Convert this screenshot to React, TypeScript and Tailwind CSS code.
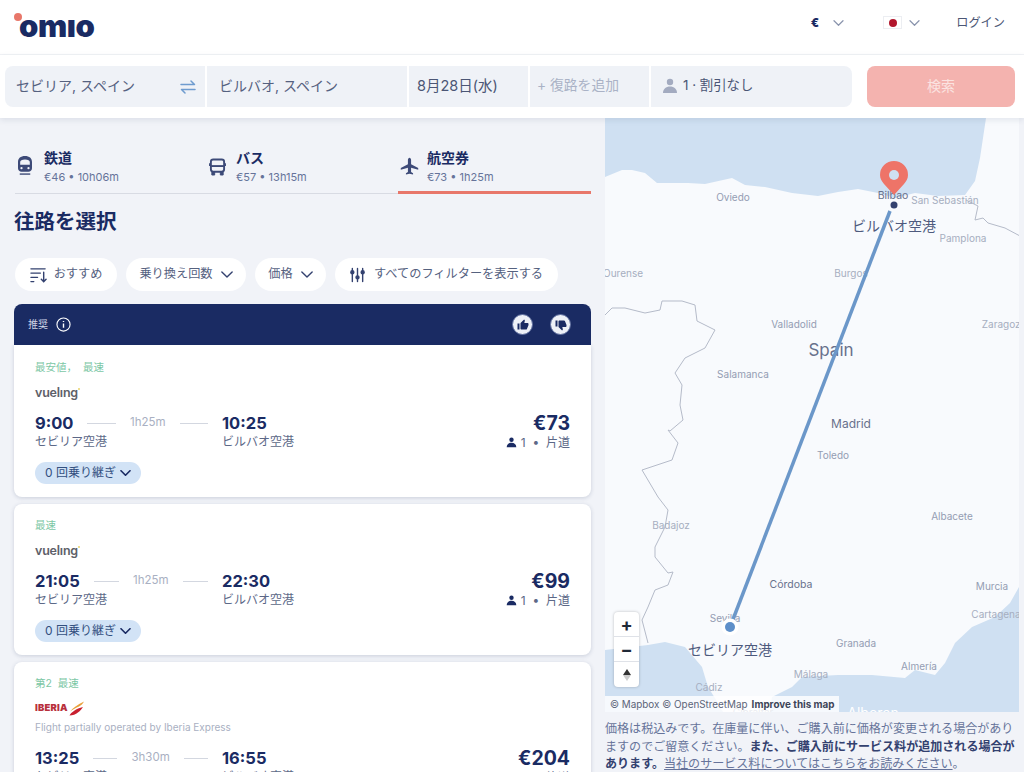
import React from "react";

const FONT = "[font-family:Inter,'Noto_Sans_CJK_JP',sans-serif]";

const Chevron = ({ className }: { className?: string }) => (
  <svg viewBox="0 0 14 8" className={className} fill="none" stroke="currentColor" strokeWidth="1.6" strokeLinecap="round" strokeLinejoin="round">
    <path d="M1 1l6 6 6-6" />
  </svg>
);

const Person = ({ className }: { className?: string }) => (
  <svg viewBox="0 0 16 16" className={className} fill="currentColor">
    <circle cx="8" cy="4" r="3.2" />
    <path d="M1 15c0-4 3-6.5 7-6.5s7 2.5 7 6.5z" />
  </svg>
);

const Train = () => (
  <svg viewBox="0 0 18 24" className="mt-[7px] h-[21px] w-[16px] text-[#3d4a78]" fill="currentColor">
    <path fillRule="evenodd" d="M9 1C4 1 1 3.5 1 8v7c0 2.5 2 4 4 4h8c2 0 4-1.500 4-4V8c0-4.500-3-7-8-7zM3.500 8c0-2 2-3 5.500-3s5.500 1 5.500 3v3h-11z" />
    <circle cx="5" cy="15" r="1.300" fill="#f1f3f8" />
    <circle cx="13" cy="15" r="1.300" fill="#f1f3f8" />
    <path d="M3 21h12v1.600H3z" />
  </svg>
);

const Bus = () => (
  <svg viewBox="0 0 18 20" className="mt-[9px] h-[20px] w-[17px] text-[#3d4a78]" fill="none" stroke="currentColor" strokeWidth="2">
    <rect x="2" y="2" width="14" height="13" rx="2.500" />
    <path d="M2 9h14" />
    <path d="M3 15v3.500h3V15M12 15v3.500h3V15" fill="currentColor" strokeWidth="1" />
    <path d="M0.800 6v3M17.200 6v3" strokeWidth="1.500" />
  </svg>
);

const Plane = () => (
  <svg viewBox="0 0 24 24" className="mt-[9px] h-[19px] w-[19px] text-[#3d4a78]" fill="currentColor">
    <path d="M23 16v-2l-9-5V3.500C14 2.670 13 1 12 1s-2 1.670-2 2.500V9l-9 5v2l9-2.500V19l-2.500 1.500V22l4.500-1 4.500 1v-1.500L14 19v-5.500z" />
  </svg>
);

const SortIcon = () => (
  <svg viewBox="0 0 18 16" className="h-[16px] w-[17px] text-[#33416f]" fill="none" stroke="currentColor" strokeWidth="1.500" strokeLinecap="round">
    <path d="M1 1.500h15M1 6h10M1 10.500h7M1 15h3" />
    <path d="M14.500 5v10M12 12.500l2.500 2.700 2.500-2.700" />
  </svg>
);

const SlidersIcon = () => (
  <svg viewBox="0 0 16 16" className="h-[16px] w-[15px] text-[#33416f]" fill="none" stroke="currentColor" strokeWidth="1.500" strokeLinecap="round">
    <path d="M2.500 1v14M8 1v14M13.500 1v14" />
    <circle cx="2.500" cy="5" r="1.600" fill="currentColor" />
    <circle cx="8" cy="10.500" r="1.600" fill="currentColor" />
    <circle cx="13.500" cy="5" r="1.600" fill="currentColor" />
  </svg>
);

const Thumb = ({ down }: { down?: boolean }) => (
  <div className="flex h-[21px] w-[21px] items-center justify-center rounded-full border border-[#5f6f9f] bg-[#eef1f7]">
    <svg viewBox="0 0 24 24" className={down ? "h-[12px] w-[12px] -scale-y-100 text-[#1a2b63]" : "h-[12px] w-[12px] text-[#1a2b63]"} fill="currentColor">
      <path d="M1 21h4V9H1v12zm22-11c0-1.100-.9-2-2-2h-6.310l.95-4.570.03-.32c0-.41-.17-.79-.44-1.060L14.170 1 7.590 7.590C7.220 7.950 7 8.450 7 9v10c0 1.100.9 2 2 2h9c.83 0 1.540-.5 1.840-1.220l3.020-7.050c.09-.23.14-.47.14-.73v-2z" />
    </svg>
  </div>
);

const Tab = ({ icon, title, sub, active, width }: { icon: React.ReactNode; title: string; sub: string; active?: boolean; width: string }) => (
  <div className={`${width} flex items-start ${active ? "-mb-px h-[46px] border-b-[3px] border-[#e8776a]" : "h-[45px]"}`}>
    <div className="flex w-[29px] justify-start pl-[2px]">{icon}</div>
    <div className="flex flex-col">
      <span className="text-[14px] font-bold leading-[20px] text-[#1a2b63]">{title}</span>
      <span className="text-[11px] leading-[18px] text-[#66739a]">{sub}</span>
    </div>
  </div>
);

const Times = ({ dep, arr, dur, from, to, price }: { dep: string; arr: string; dur: string; from: string; to: string; price: string }) => (
  <div className="flex items-start justify-between">
    <div className="flex flex-col">
      <div className="flex h-[22px] items-center">
        <div className="flex w-[187px] items-center gap-[14px] pr-[14px]">
          <span className="text-[16.500px] font-bold text-[#1a2b63]">{dep}</span>
          <div className="h-px flex-1 bg-[#d3d7e0]" />
          <span className="text-[11.500px] text-[#a9b0c2]">{dur}</span>
          <div className="h-px flex-1 bg-[#d3d7e0]" />
        </div>
        <span className="text-[16.500px] font-bold text-[#1a2b63]">{arr}</span>
      </div>
      <div className="flex h-[16px] text-[12px] leading-[16px] text-[#5c6887]">
        <span className="w-[187px]">{from}</span>
        <span>{to}</span>
      </div>
    </div>
    <div className="flex flex-col items-end">
      <span className="text-[19.500px] font-bold leading-[23px] text-[#1a2b63]">{price}</span>
      <div className="flex h-[15px] items-center gap-[4px] text-[12px] text-[#5c6887]">
        <Person className="h-[11px] w-[11px] text-[#1a2b63]" />
        <span>1&nbsp;&nbsp;•&nbsp;&nbsp;片道</span>
      </div>
    </div>
  </div>
);

const StopsPill = () => (
  <div className="mt-[12px] flex h-[22px] w-[106px] items-center justify-center gap-[4px] rounded-full bg-[#d2e3f6] text-[12px] text-[#33507f]">
    <span>0 回乗り継ぎ</span>
    <Chevron className="h-[6px] w-[11px] text-[#1a2b63] [stroke-width:2.2]" />
  </div>
);

const Vueling = () => (
  <div className="mt-[8px] flex h-[20px] items-center">
    <span className="text-[12.500px] font-semibold tracking-[-0.2px] text-[#5d6068]">vuelıng</span>
    <span className="mb-[8px] h-[2px] w-[2px] rounded-full bg-[#e9d36a]" />
  </div>
);

const labels: [string, number, number, number, string][] = [
  ["Oviedo", 128, 83, 10, "#949db3"],
  ["Bilbao", 288, 81, 10.500, "#68718c"],
  ["San Sebastián", 340, 86, 10, "#a6aec0"],
  ["Pamplona", 358, 124, 10, "#a6aec0"],
  ["Ourense", 18, 159, 10, "#a6aec0"],
  ["Burgos", 246, 159, 10, "#a6aec0"],
  ["Valladolid", 189, 210, 10, "#949db3"],
  ["Zaragoza", 399, 210, 10, "#a6aec0"],
  ["Spain", 226, 238, 17, "#68718c"],
  ["Salamanca", 138, 260, 10, "#949db3"],
  ["Madrid", 246, 310, 12, "#68718c"],
  ["Toledo", 228, 341, 10, "#949db3"],
  ["Badajoz", 66, 411, 10, "#a6aec0"],
  ["Albacete", 347, 402, 10, "#949db3"],
  ["Córdoba", 186, 470, 10.500, "#68718c"],
  ["Murcia", 387, 472, 10, "#949db3"],
  ["Cartagena", 391, 500, 10, "#a6aec0"],
  ["Sevilla", 120, 504, 10, "#949db3"],
  ["Granada", 251, 529, 10, "#949db3"],
  ["Almería", 314, 552, 10, "#949db3"],
  ["Málaga", 206, 560, 10, "#a6aec0"],
  ["Cádiz", 104, 573, 10, "#a6aec0"],
  ["Gibraltar", 148, 598, 10, "#949db3"],
  ["Alboran", 268, 600, 14, "#ffffff"],
];

const MapPanel = () => (
  <div className="relative h-[594px] w-[414px] overflow-hidden bg-[#f8fafd]">
    <svg viewBox="0 0 414 594" className="absolute inset-0 h-[594px] w-[414px]">
      <path fill="#cfe0f2" d="M0 59L17 52L27 52L40 55L52 65L83 65L100 66L127 60L140 67L160 69L187 75L213 78L233 74L253 71L273 75L290 80L310 75L333 78L360 77L370 63L375 40L381 0L0 0Z" />
      <path fill="#cfe0f2" d="M0 532L43 527L60 524L80 529L97 549L103 569L113 585L118 594L0 594Z" />
      <path fill="#cfe0f2" d="M165 594L167 579L187 569L197 559L233 557L267 557L300 560L310 552L330 557L340 545L350 525L367 509L390 499L405 485L414 469L414 594Z" />
      <path fill="none" stroke="#b5bbc9" strokeWidth="1" d="M361 82L373 88L370 102L378 100L383 105L400 110L415 118" />
      <path fill="none" stroke="#b5bbc9" strokeWidth="1" d="M0 197L7 190L20 190L40 195L55 192L57 183L77 183L90 187L92 203L110 212L100 230L80 240L70 255L77 267L75 287L78 302L65 313L63 312L73 325L67 342L37 352L53 379L63 392L60 409L50 429L50 439L63 455L68 454L63 467L50 472L43 489L37 502L43 525" />
      {labels.map(([t, x, y, s, c]) => (
        <text key={t} x={x} y={y} fontSize={s} fill={c} textAnchor="middle" fontFamily="Inter, sans-serif">{t}</text>
      ))}
      <text x="289" y="113" fontSize="14" fill="#4e5a7d" textAnchor="middle" fontFamily="'Noto Sans CJK JP', sans-serif">ビルバオ空港</text>
      <text x="125" y="537" fontSize="14" fill="#4e5a7d" textAnchor="middle" fontFamily="'Noto Sans CJK JP', sans-serif">セビリア空港</text>
      <path d="M285 93L127 504" stroke="#6b97c9" strokeWidth="3.500" />
      <circle cx="125" cy="509" r="8.500" fill="#ffffff" />
      <circle cx="125" cy="509" r="5" fill="#5e8fc9" />
      <circle cx="289" cy="87" r="3.500" fill="#33416f" />
      <path fill="#ee7468" d="M289 77L279 66C277 63 275 61 275 57a14 14 0 0 1 28 0C303 61 301 63 299 66Z" />
      <circle cx="289" cy="57" r="5" fill="#cfe0f2" />
    </svg>
    <div className="absolute left-[9px] top-[494px] flex h-[75px] w-[25px] flex-col divide-y divide-[#dfe2e8] rounded-[4px] bg-white text-[#1f2937] shadow-[0_0_3px_rgba(0,0,0,0.25)]">
      <div className="flex h-[25px] items-center justify-center text-[18px] font-bold">+</div>
      <div className="flex h-[25px] items-center justify-center text-[18px] font-bold">−</div>
      <div className="flex h-[25px] flex-col items-center justify-center">
        <div className="h-0 w-0 border-x-[4px] border-b-[6px] border-x-transparent border-b-[#333]" />
        <div className="h-0 w-0 border-x-[4px] border-t-[6px] border-x-transparent border-t-[#ccc]" />
      </div>
    </div>
    <div className="absolute bottom-0 left-0 flex h-[16px] w-[234px] items-center gap-[4px] bg-[#ffffffcc] pl-[5px] text-[9.900px] text-[#5c6478]">
      <span className="whitespace-nowrap">© Mapbox © OpenStreetMap</span>
      <span className="whitespace-nowrap font-bold text-[#3d4558]">Improve this map</span>
    </div>
  </div>
);

export default function App() {
  return (
    <div className={`${FONT} h-[772px] w-[1024px] overflow-hidden bg-[#f1f3f8]`}>
      <header className="flex h-[55px] items-center justify-between border-b border-[#f1f3f6] bg-white pl-[14px] pr-[19px]">
        <div className="relative mb-[4px] flex h-[40px] items-center pl-[5px]">
          <span className="text-[31px] font-black leading-none tracking-[-0.4px] text-[#1a2b63]">omıo</span>
          <span className="absolute left-0 top-[8px] h-[8px] w-[8px] rounded-full bg-[#e8776a]" />
        </div>
        <div className="mb-[8px] flex items-center text-[#8a94ad]">
          <span className="text-[12px] font-black text-[#1a2b63]">€</span>
          <Chevron className="ml-[14px] h-[6px] w-[11px]" />
          <div className="ml-[39px] flex h-[13px] w-[19px] items-center justify-center border border-[#eceef2] bg-white">
            <span className="h-[8px] w-[8px] rounded-full bg-[#b1162c]" />
          </div>
          <Chevron className="ml-[7px] h-[6px] w-[11px]" />
          <span className="ml-[36px] text-[12.200px] text-[#4b5675]">ログイン</span>
        </div>
      </header>

      <div className="relative z-10 flex h-[63px] items-center justify-between bg-white pl-[5px] pr-[9px] shadow-[0_2px_6px_rgba(30,45,90,0.10)]">
        <div className="flex h-[41px] w-[847px] gap-[2px] text-[14px]">
          <div className="flex w-[200px] items-center justify-between rounded-l-lg bg-[#eff2f7] pb-[2px] pl-[11px] pr-[9px] text-[#55617f]">
            <span>セビリア, スペイン</span>
            <svg viewBox="0 0 16 14" className="mt-[2px] h-[14px] w-[16px] text-[#6f9ccf]" fill="none" stroke="currentColor" strokeWidth="1.500" strokeLinecap="round" strokeLinejoin="round">
              <path d="M1 4.500h13.500L11 1M15 9.500H1.500L5 13" />
            </svg>
          </div>
          <div className="flex w-[200px] items-center bg-[#eff2f7] pb-[2px] pl-[12px] text-[#55617f]">ビルバオ, スペイン</div>
          <div className="flex w-[119px] items-center bg-[#eff2f7] pb-[2px] pl-[8px] text-[14.500px] text-[#4b5675]">8月28日(水)</div>
          <div className="flex w-[119px] items-center bg-[#eff2f7] pb-[2px] pl-[7px] text-[13.800px] text-[#aab2c6]">+ 復路を追加</div>
          <div className="flex flex-1 items-center gap-[5px] rounded-r-lg bg-[#eff2f7] pb-[2px] pl-[11px] text-[13.400px] text-[#4b5675]">
            <Person className="h-[16px] w-[16px] text-[#a3abc0]" />
            <span>1 · 割引なし</span>
          </div>
        </div>
        <div className="flex h-[41px] w-[148px] items-center justify-center rounded-lg bg-[#f4b3af] pb-[2px] text-[14px] text-[#fbe3e1]">検索</div>
      </div>

      <div className="flex h-[654px]">
        <main className="h-[654px] w-[605px] overflow-hidden pl-[14px] pr-[14px] pt-[30px]">
          <div className="ml-[1px] flex border-b border-[#d8dbe3]">
            <Tab width="w-[192px]" icon={<Train />} title="鉄道" sub="€46 • 10h06m" />
            <Tab width="w-[191px]" icon={<Bus />} title="バス" sub="€57 • 13h15m" />
            <Tab width="w-[193px]" icon={<Plane />} title="航空券" sub="€73 • 1h25m" active />
          </div>
          <h1 className="mt-[14px] text-[20.500px] font-bold leading-[28px] text-[#1a2b63]">往路を選択</h1>

          <div className="ml-[1px] mt-[22px] flex gap-[9px] text-[12.200px] text-[#55617f]">
            <div className="flex h-[33px] w-[102px] items-center justify-center gap-[7px] rounded-full bg-white"><SortIcon /><span>おすすめ</span></div>
            <div className="flex h-[33px] w-[120px] items-center justify-center gap-[8px] rounded-full bg-white"><span>乗り換え回数</span><Chevron className="h-[7px] w-[12px] text-[#33416f]" /></div>
            <div className="flex h-[33px] w-[71px] items-center justify-center gap-[8px] rounded-full bg-white"><span>価格</span><Chevron className="h-[7px] w-[12px] text-[#33416f]" /></div>
            <div className="flex h-[33px] w-[223px] items-center justify-center gap-[9px] rounded-full bg-white"><SlidersIcon /><span>すべてのフィルターを表示する</span></div>
          </div>

          <div className="mt-[13px] flex h-[41px] items-center justify-between rounded-t-lg bg-[#1a2b63] pl-[14px] pr-[20px]">
            <div className="flex items-center gap-[8px] text-[10px] text-[#cfd5e6]">
              <span>推奨</span>
              <svg viewBox="0 0 16 16" className="h-[15px] w-[15px] text-white" fill="none" stroke="currentColor" strokeWidth="1.200">
                <circle cx="8" cy="8" r="7" />
                <path d="M8 7v4.500M8 4.200v1.200" strokeWidth="1.500" />
              </svg>
            </div>
            <div className="flex gap-[17px]"><Thumb /><Thumb down /></div>
          </div>

          <div className="flex flex-col gap-[7px]">
            <section className="rounded-b-lg bg-white pb-[13px] pl-[21px] pr-[21px] pt-[16px] shadow-[0_1px_4px_rgba(30,45,90,0.18)]">
              <div className="h-[14px] text-[10.500px] leading-[14px] text-[#7cc7a5]">最安値，&nbsp;&nbsp;最速</div>
              <Vueling />
              <div className="mt-[9px]"><Times dep="9:00" arr="10:25" dur="1h25m" from="セビリア空港" to="ビルバオ空港" price="€73" /></div>
              <StopsPill />
            </section>
            <section className="rounded-lg bg-white pb-[13px] pl-[21px] pr-[21px] pt-[15px] shadow-[0_1px_4px_rgba(30,45,90,0.18)]">
              <div className="h-[14px] text-[10.500px] leading-[14px] text-[#7cc7a5]">最速</div>
              <Vueling />
              <div className="mt-[9px]"><Times dep="21:05" arr="22:30" dur="1h25m" from="セビリア空港" to="ビルバオ空港" price="€99" /></div>
              <StopsPill />
            </section>
            <section className="rounded-lg bg-white pb-[13px] pl-[21px] pr-[21px] pt-[15px] shadow-[0_1px_4px_rgba(30,45,90,0.18)]">
              <div className="h-[14px] text-[10.500px] leading-[14px] text-[#7cc7a5]">第2&nbsp;&nbsp;最速</div>
              <div className="mt-[7px] flex h-[20px] items-center gap-[1px]">
                <span className="text-[9.500px] font-black tracking-[0.2px] text-[#b8303c]">IBERIA</span>
                <svg viewBox="0 0 16 14" className="h-[15px] w-[16px]">
                  <path d="M1 10C4 6 9 3 15 0C14 2 12 4 10 5C7 6 4 8 1 10Z" fill="#e9a13b" />
                  <path d="M0.500 14C2 11 7 7 14 5.500C12 9 7 14 0.500 14Z" fill="#c8202f" />
                </svg>
              </div>
              <div className="mt-[2px] text-[10px] leading-[14px] text-[#a9b0c2]">Flight partially operated by Iberia Express</div>
              <div className="mt-[13px]"><Times dep="13:25" arr="16:55" dur="3h30m" from="セビリア空港" to="ビルバオ空港" price="€204" /></div>
            </section>
          </div>
        </main>

        <aside className="w-[419px]">
          <MapPanel />
          <p className="mt-[8px] w-[414px] text-[12.050px] leading-[17.500px] text-[#66739a]">
            価格は税込みです。在庫量に伴い、ご購入前に価格が変更される場合があり ますのでご留意ください。<b className="font-bold text-[#33416f]">また、ご購入前にサービス料が追加される場合があります。</b><span className="underline">当社のサービス料についてはこちらをお読みください</span>。
          </p>
        </aside>
      </div>
    </div>
  );
}
